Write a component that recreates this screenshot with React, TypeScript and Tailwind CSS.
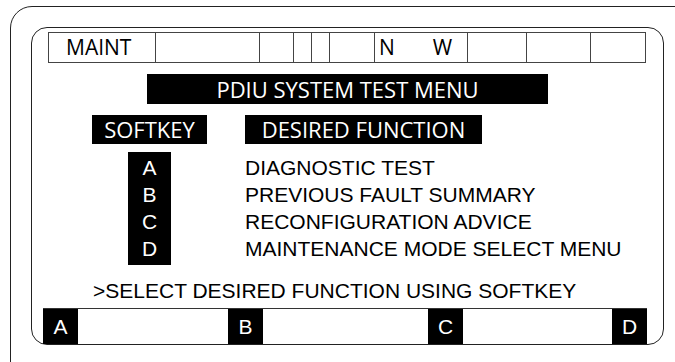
import React from "react";

const sans = { fontFamily: '"Liberation Sans", Arial, sans-serif' };
const open = { fontFamily: '"Open Sans", "Noto Sans", sans-serif' };

export default function App() {
  const letters = ["A", "B", "C", "D"];
  const items = [
    "DIAGNOSTIC TEST",
    "PREVIOUS FAULT SUMMARY",
    "RECONFIGURATION ADVICE",
    "MAINTENANCE MODE SELECT MENU",
  ];
  return (
    <div className="w-[675px] h-[362px] overflow-hidden bg-white">
      <div className="ml-[10px] mt-[6px] w-[690px] h-[380px] border border-[#222] rounded-[22px]">
        <div className="ml-[20px] mt-[20px] w-[633px] h-[318px] border border-[#222] rounded-[16px] flex flex-col items-start">
          {/* status row */}
          <div
            className="ml-[16px] mt-[4px] w-[598px] flex h-[31px] border border-[#444] text-black text-[21px] leading-[29px]"
            style={open}
          >
            <div className="w-[107px] border-r border-[#444] pl-[17px]">MAINT</div>
            <div className="w-[104px] border-r border-[#444]" />
            <div className="w-[34px] border-r border-[#444]" />
            <div className="w-[18px] border-r border-[#444]" />
            <div className="w-[18px] border-r border-[#444]" />
            <div className="w-[45px] border-r border-[#444]" />
            <div className="w-[93px] border-r border-[#444] pl-[4px] flex">
              <span>N</span>
              <span className="ml-[38px]">W</span>
            </div>
            <div className="w-[59px] border-r border-[#444]" />
            <div className="w-[64px] border-r border-[#444]" />
            <div className="w-[54px]" />
          </div>

          {/* title */}
          <div
            className="ml-[115px] mt-[11px] w-[401px] h-[30px] bg-black text-white text-[22px] leading-[30px] text-center"
            style={open}
          >
            PDIU SYSTEM TEST MENU
          </div>

          {/* headers */}
          <div className="mt-[11px] flex" style={open}>
            <div className="ml-[60px] w-[115px] h-[29px] bg-black text-white text-[22px] leading-[29px] text-center">
              SOFTKEY
            </div>
            <div className="ml-[38px] w-[237px] h-[29px] bg-black text-white text-[22px] leading-[29px] text-center">
              DESIRED FUNCTION
            </div>
          </div>

          {/* list */}
          <div className="mt-[8px] flex text-[21px] leading-[27px]" style={sans}>
            <div className="ml-[96px] w-[43px] bg-black text-white text-center pt-[2px] pb-[3px]">
              {letters.map((l) => (
                <div key={l}>{l}</div>
              ))}
            </div>
            <div className="ml-[74px] pt-[2px] text-black">
              {items.map((t) => (
                <div key={t}>{t}</div>
              ))}
            </div>
          </div>

          {/* prompt */}
          <div className="mt-[12px] ml-[61px] text-[21px] leading-[27px] text-black" style={sans}>
            &gt;SELECT DESIRED FUNCTION USING SOFTKEY
          </div>

          {/* softkeys */}
          <div
            className="mt-auto ml-[11px] w-[604px] h-[36px] border-t border-[#333] flex text-white text-[21px]"
            style={sans}
          >
            <div className="w-[35px] bg-black flex items-center justify-center">A</div>
            <div className="ml-[150px] w-[35px] bg-black flex items-center justify-center">B</div>
            <div className="ml-[165px] w-[35px] bg-black flex items-center justify-center">C</div>
            <div className="ml-[149px] w-[35px] bg-black flex items-center justify-center">D</div>
          </div>
        </div>
      </div>
    </div>
  );
}
